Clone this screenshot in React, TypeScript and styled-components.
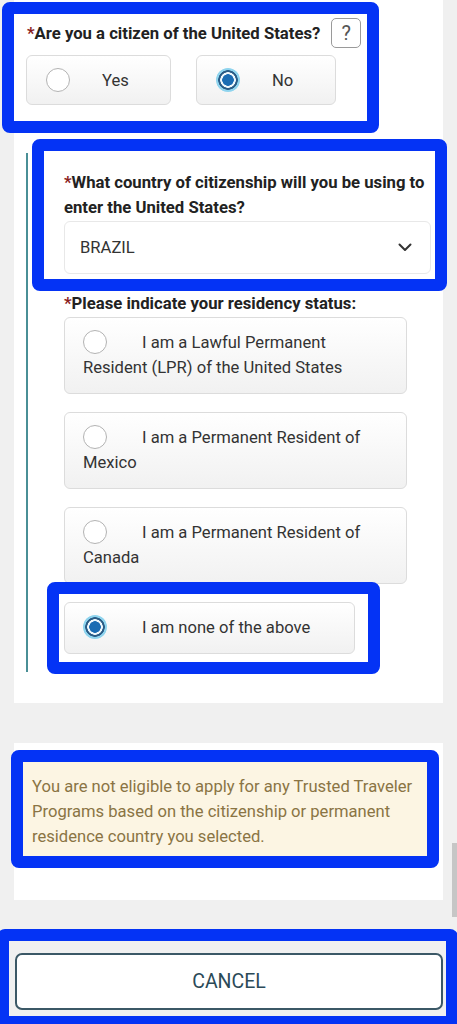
import React from 'react';
import styled, { createGlobalStyle } from 'styled-components';

const GlobalStyle = createGlobalStyle`
  html, body {
    margin: 0;
    padding: 0;
    background: #f0f0f0;
  }
  body {
    font-family: Roboto, "Liberation Sans", Arial, sans-serif;
    color: #333;
  }
  * {
    box-sizing: border-box;
  }
`;

const Page = styled.div`
  position: relative;
  width: 457px;
  height: 1024px;
  overflow: hidden;
  background: #f0f0f0;
`;

// blue annotation frame drawn over a region
const Marked = styled.div<{ $inset: string }>`
  position: relative;

  &::after {
    content: '';
    position: absolute;
    inset: ${(p) => p.$inset};
    border: 12px solid #0433f5;
    border-radius: 8px;
    pointer-events: none;
  }
`;

const MainCard = styled.section`
  margin: 0 14px;
  background: #fff;
  padding: 0 12px 31px 12px;
`;

const QuestionBlock = styled(Marked)`
  padding-top: 18px;
`;

const TitleRow = styled.div`
  display: flex;
  align-items: center;
  gap: 11px;
  height: 30px;
  padding-left: 1px;
`;

const Title = styled.div`
  font-size: 16.7px;
  font-weight: 700;
  line-height: 25px;
  color: #222;
`;

const Star = styled.span`
  color: #8b1c1c;
`;

const HelpButton = styled.button`
  width: 30px;
  height: 30px;
  padding: 0;
  border: 1px solid #9a9a9a;
  border-radius: 5px;
  background: #fff;
  color: #555;
  font-family: inherit;
  font-size: 20px;
  line-height: 28px;
`;

const ChoiceRow = styled.div`
  display: flex;
  gap: 25px;
  margin-top: 7px;
`;

const ChoiceButton = styled.div<{ $width: number }>`
  display: flex;
  align-items: center;
  gap: 32px;
  width: ${(p) => p.$width}px;
  height: 50px;
  padding-left: 19px;
  border: 1px solid #dcdcdc;
  border-radius: 6px;
  background: linear-gradient(#ffffff, #f1f1f1);
  font-size: 16.6px;
  color: #333;
`;

const Radio = styled.span<{ $checked?: boolean }>`
  display: block;
  flex: none;
  width: 24px;
  height: 24px;
  border-radius: 50%;
  ${(p) =>
    p.$checked
      ? `background: radial-gradient(circle, #1a6cb3 0 5.5px, #eef7fc 6px 7.5px, #2a5c86 8px 9.5px, #8fd4ee 10px 12px, transparent 12.5px);`
      : `background: #fff; border: 1.5px solid #b3b3b3;`}
`;

const Section = styled.div`
  margin-top: 48px;
  border-left: 2px solid #4a8f96;
  padding: 17px 0 18px 36px;
`;

const Select = styled.div`
  display: flex;
  align-items: center;
  justify-content: space-between;
  height: 53px;
  margin-top: 1px;
  padding: 0 18px 0 15px;
  border: 1px solid #e8e8e8;
  border-radius: 6px;
  background: #fff;
  font-size: 16.6px;
  color: #333;
`;

const StatusLabel = styled(Title)`
  margin-top: 17px;
  margin-bottom: 1px;
`;

const Option = styled.div<{ $width?: number }>`
  width: ${(p) => p.$width ?? 343}px;
  padding: 12px 18px 13px 18px;
  border: 1px solid #dcdcdc;
  border-radius: 6px;
  background: linear-gradient(#ffffff, #f1f1f1);
  font-size: 16.6px;
  line-height: 25px;
  color: #333;

  & + & {
    margin-top: 18px;
  }
`;

const OptionRadio = styled(Radio)`
  float: left;
  margin-right: 35px;
`;

const LastOption = styled(Marked)`
  margin-top: 18px;
  width: 291px;
`;

const NoticeCard = styled.section`
  margin: 40px 14px 0 14px;
  background: #fff;
  padding: 14px 6px 39px 6px;
`;

const Notice = styled(Marked)`
  padding: 17px 11px 12px 12px;
  background: #fcf5e3;
  color: #8a7444;
  font-size: 16.6px;
  line-height: 25px;
`;

const Footer = styled(Marked)`
  margin-top: 29px;
  height: 94px;
  padding: 24px 14px 13px 15px;
  background: #f0f0f0;
`;

const CancelButton = styled.button`
  display: block;
  width: 100%;
  height: 57px;
  border: 2px solid #3b5866;
  border-radius: 7px;
  background: #fff;
  color: #2b4a58;
  font-family: inherit;
  font-size: 19.5px;
`;

const ScrollThumb = styled.div`
  position: absolute;
  right: 0;
  top: 843px;
  width: 5px;
  height: 74px;
  background: #c6c6c6;
`;

const Chevron = () => (
  <svg width="14" height="9" viewBox="0 0 14 9" fill="none">
    <path d="M1.5 1.5 7 7l5.5-5.5" stroke="#333" strokeWidth="2" strokeLinecap="round" strokeLinejoin="round" />
  </svg>
);

const statuses = [
  'I am a Lawful Permanent Resident (LPR) of the United States',
  'I am a Permanent Resident of Mexico',
  'I am a Permanent Resident of Canada',
];

export default function App() {
  return (
    <Page>
      <GlobalStyle />
      <MainCard>
        <QuestionBlock $inset="2px 52px -28px -24px">
          <TitleRow>
            <Title>
              <Star>*</Star>Are you a citizen of the United States?
            </Title>
            <HelpButton>?</HelpButton>
          </TitleRow>
          <ChoiceRow>
            <ChoiceButton $width={145}>
              <Radio />
              Yes
            </ChoiceButton>
            <ChoiceButton $width={140}>
              <Radio $checked />
              No
            </ChoiceButton>
          </ChoiceRow>
        </QuestionBlock>

        <Section>
          <Marked $inset="-31px -16px -17px -32px">
            <Title>
              <Star>*</Star>What country of citizenship will you be using to enter the United States?
            </Title>
            <Select>
              BRAZIL
              <Chevron />
            </Select>
          </Marked>

          <StatusLabel>
            <Star>*</Star>Please indicate your residency status:
          </StatusLabel>
          {statuses.map((s) => (
            <Option key={s}>
              <OptionRadio />
              {s}
            </Option>
          ))}
          <LastOption $inset="-20px -25px -20px -17px">
            <Option $width={291}>
              <OptionRadio $checked />
              I am none of the above
            </Option>
          </LastOption>
        </Section>
      </MainCard>

      <NoticeCard>
        <Notice $inset="-7px -2px -7px -9px">
          You are not eligible to apply for any Trusted Traveler Programs based on the citizenship or
          permanent residence country you selected.
        </Notice>
      </NoticeCard>

      <Footer $inset="0 -1px -5px -3px">
        <CancelButton>CANCEL</CancelButton>
      </Footer>
      <ScrollThumb />
    </Page>
  );
}
